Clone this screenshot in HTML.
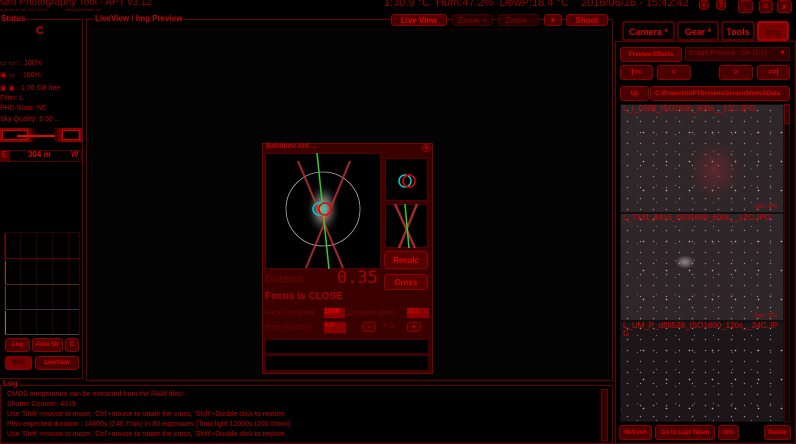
<!DOCTYPE html>
<html><head><meta charset="utf-8"><style>
*{margin:0;padding:0;box-sizing:border-box}
body{width:796px;height:444px;background:#000;overflow:hidden;position:relative;font-family:"Liberation Sans","DejaVu Sans",sans-serif;color:#c00000}
.a{position:absolute}
.t{position:absolute;white-space:nowrap}
.btn{position:absolute;background:#4a0000;border:1px solid #800;border-radius:3px;color:#e00000;font-weight:bold;font-size:8px;text-align:center;display:flex;align-items:center;justify-content:center;white-space:nowrap}
.box{position:absolute;border:1px solid #5a0000}
.img{position:absolute;background:#2e2628;background-image:radial-gradient(circle,#a08890 0.5px,transparent 0.9px),radial-gradient(circle,#705860 0.5px,transparent 0.9px),radial-gradient(circle,#c0a8b0 0.6px,transparent 1px);background-size:13px 11px,19px 17px,23px 29px;background-position:0 0,7px 4px,11px 13px}
.lbl{position:absolute;color:#e00000;font-size:7px;white-space:nowrap}
.il{position:absolute;white-space:nowrap;font-size:8px;color:#d00;z-index:2}
</style></head><body>
<div class="t" style="left:0;top:-3px;font-size:10px;color:#900">stro Photography Tool - APT v3.12</div>
<div class="t" style="left:0;top:7px;font-size:4px;color:#900">(c)Incanus Ltd. 2009-2016 &nbsp;&nbsp;&nbsp;&nbsp;&nbsp;&nbsp;&nbsp;&nbsp;&nbsp;&nbsp;&nbsp;&nbsp;&nbsp;&nbsp;&nbsp; www.AstroPlace.net</div>
<div class="t" style="left:384px;top:-3px;font-size:11px;color:#900">1:30.9 °C &nbsp;Hum:47.2% &nbsp;DewP:18.4 °C &nbsp;&nbsp;&nbsp;2016/06/16 - 15:42:42</div>
<div class="btn" style="left:699px;top:0;width:10px;height:10px;font-size:7px">i</div>
<div class="btn" style="left:716px;top:0;width:10px;height:10px;font-size:7px">?</div>
<div class="btn" style="left:738px;top:0;width:15px;height:13px">_</div>
<div class="btn" style="left:759px;top:0;width:14px;height:13px">=</div>
<div class="btn" style="left:777px;top:0;width:15px;height:13px">x</div>

<div class="box" style="left:-2px;top:19px;width:85px;height:360px;border-color:#600"></div>
<div class="t" style="left:0;top:14px;font-size:8px;background:#000;padding:0 1px;color:#c00;font-weight:bold">Status</div>
<div class="t" style="left:36px;top:25px;font-size:11px;font-weight:bold;color:#c00">C</div>
<div class="lbl" style="left:0;top:59px;color:#b00">▭ ▭ ⁄ : 100%</div>
<div class="lbl" style="left:0;top:71px;color:#b00">▣ ▭ &nbsp;: 100%</div>
<div class="lbl" style="left:0;top:84px;color:#b00">▣ ▣ : 1.76 GB free</div>
<div class="lbl" style="left:0;top:95px;color:#b00">Filter: L</div>
<div class="lbl" style="left:0;top:105px;color:#b00">PHD State: NC</div>
<div class="lbl" style="left:0;top:116px;color:#b00">Sky Quality: 6.50 ...</div>
<div class="a" style="left:0;top:128px;width:82px;height:14px;background:linear-gradient(90deg,#800 0,#800 28px,#300 32px,#000 38px,#000 52px,#300 56px,#800 62px,#800)"></div>
<div class="a" style="left:2px;top:130px;width:26px;height:10px;border:1px solid #c00;background:#000"></div>
<div class="a" style="left:62px;top:130px;width:18px;height:10px;border:1px solid #c00;background:#000"></div>
<div class="a" style="left:17px;top:135px;width:38px;height:2px;background:#e00"></div>
<div class="a" style="left:0;top:150px;width:82px;height:12px;border:1px solid #500"></div>
<div class="a" style="left:0;top:150px;width:10px;height:12px;background:#500"></div>
<div class="t" style="left:2px;top:150px;font-size:8px;font-weight:bold">E</div>
<div class="t" style="left:28px;top:150px;font-size:8px;font-weight:bold;color:#d00">304 m</div>
<div class="t" style="left:71px;top:150px;font-size:8px;font-weight:bold">W</div>
<div class="a" style="left:4px;top:232px;width:76px;height:103px;border:1px solid #300;background:repeating-linear-gradient(90deg,transparent 0 15px,#2a0000 15px 16px)"></div>
<div class="a" style="left:5px;top:258px;width:74px;height:1px;background:#600"></div>
<div class="a" style="left:5px;top:284px;width:74px;height:1px;background:#553300"></div>
<div class="a" style="left:5px;top:309px;width:74px;height:1px;background:#403050"></div>
<div class="a" style="left:5px;top:334px;width:74px;height:1px;background:#444"></div>
<div class="a" style="left:5px;top:234px;width:1px;height:24px;background:#800"></div>
<div class="a" style="left:5px;top:261px;width:1px;height:23px;background:#660"></div>
<div class="a" style="left:5px;top:286px;width:1px;height:23px;background:#346"></div>
<div class="a" style="left:5px;top:311px;width:1px;height:23px;background:#777"></div>
<div class="btn" style="left:5px;top:338px;width:25px;height:14px;font-size:6px">Log</div>
<div class="btn" style="left:32px;top:338px;width:31px;height:14px;font-size:6px">Auto Str</div>
<div class="btn" style="left:65px;top:338px;width:14px;height:14px;font-size:6px">C</div>
<div class="btn" style="left:5px;top:356px;width:27px;height:14px;font-size:6px;background:#700;color:#300">RGB</div>
<div class="btn" style="left:35px;top:356px;width:44px;height:14px;font-size:6px">LiveView</div>

<div class="box" style="left:86px;top:19px;width:527px;height:362px;border-color:#600"></div>
<div class="t" style="left:94px;top:14px;font-size:8px;background:#000;padding:0 1px;font-weight:bold;color:#c00">LiveView / Img Preview</div>
<div class="btn" style="left:391px;top:14px;width:56px;height:12px;font-size:8px">Live View</div>
<div class="btn" style="left:452px;top:14px;width:41px;height:12px;font-size:8px;background:#200;color:#700;border-color:#400">Zoom +</div>
<div class="btn" style="left:498px;top:14px;width:41px;height:12px;font-size:8px;background:#200;color:#700;border-color:#400">Zoom -</div>
<div class="btn" style="left:544px;top:14px;width:18px;height:12px;font-size:9px">+</div>
<div class="btn" style="left:566px;top:14px;width:42px;height:12px;font-size:8px">Shoot</div>
<div class="a" style="left:91px;top:29px;width:518px;height:351px;border:1px dotted #2a0000;background:#030303"></div>

<div class="a" style="left:262px;top:143px;width:171px;height:231px;background:#3a0000;border:1px solid #700"></div>
<div class="t" style="left:266px;top:143px;font-size:7px;font-weight:bold;color:#b00">Bahtinov Aid ...</div>
<div class="btn" style="left:422px;top:144px;width:9px;height:8px;font-size:6px">x</div>
<div class="a" style="left:265px;top:153px;width:116px;height:116px;background:#000;border:1px solid #500"></div>
<svg class="a" style="left:265px;top:153px" width="116" height="116">
<defs><radialGradient id="g"><stop offset="0" stop-color="#fff"/><stop offset=".4" stop-color="#888"/><stop offset="1" stop-color="#000" stop-opacity="0"/></radialGradient></defs>
<ellipse cx="58" cy="56" rx="18" ry="28" fill="url(#g)" opacity=".7"/>
<circle cx="58" cy="56" r="37" fill="none" stroke="#aaa" stroke-width=".8"/>
<line x1="33" y1="8" x2="78" y2="115" stroke="#c33" stroke-width="2" opacity=".8"/>
<line x1="85" y1="8" x2="41" y2="115" stroke="#c33" stroke-width="2" opacity=".8"/>
<line x1="52" y1="0" x2="64" y2="116" stroke="#3c3" stroke-width="1.5"/>
<circle cx="54" cy="56" r="6" fill="none" stroke="#0cc" stroke-width="1.5"/>
<circle cx="60" cy="56" r="6" fill="none" stroke="#e00" stroke-width="1.5"/>
</svg>
<div class="a" style="left:385px;top:158px;width:43px;height:43px;background:#000;border:1px solid #500"></div>
<svg class="a" style="left:385px;top:158px" width="43" height="43"><circle cx="20" cy="23" r="6" fill="none" stroke="#0cc" stroke-width="1.5"/><circle cx="24" cy="23" r="6" fill="none" stroke="#e00" stroke-width="1.5"/></svg>
<div class="a" style="left:385px;top:204px;width:43px;height:44px;background:#000;border:1px solid #500"></div>
<svg class="a" style="left:385px;top:204px" width="43" height="44"><line x1="10" y1="0" x2="30" y2="44" stroke="#c33" stroke-width="2.5" opacity=".8"/><line x1="32" y1="0" x2="14" y2="44" stroke="#c33" stroke-width="2.5" opacity=".8"/><line x1="20" y1="0" x2="24" y2="44" stroke="#3c3" stroke-width="1.5"/></svg>
<div class="btn" style="left:384px;top:251px;width:44px;height:18px;font-size:8px;background:#500">Recalc</div>
<div class="t" style="left:265px;top:274px;font-size:10px;color:#700">Distance:</div>
<div class="t" style="left:337px;top:268px;font-size:17px;color:#a00;font-family:'DejaVu Sans Mono',monospace">0.35</div>
<div class="btn" style="left:384px;top:274px;width:44px;height:16px;font-size:8px;background:#500">Cross</div>
<div class="t" style="left:265px;top:291px;font-size:10px;font-weight:bold;color:#a00">Focus is CLOSE</div>
<div class="t" style="left:265px;top:310px;font-size:7px;color:#700">Focal Len (mm):</div>
<div class="a" style="left:324px;top:308px;width:21px;height:10px;background:#800;color:#e00;font-size:7px;font-weight:bold">1000</div>
<div class="t" style="left:348px;top:310px;font-size:7px;color:#700">Diameter (mm):</div>
<div class="a" style="left:407px;top:308px;width:22px;height:10px;background:#800;color:#e00;font-size:7px">203</div>
<div class="t" style="left:265px;top:324px;font-size:7px;color:#700">Pixel (microns):</div>
<div class="a" style="left:324px;top:322px;width:22px;height:11px;background:#800;color:#e00;font-size:7px">4.3</div>
<div class="btn" style="left:362px;top:322px;width:14px;height:10px;font-size:7px">-</div>
<div class="t" style="left:383px;top:321px;font-size:8px;color:#700"># 1</div>
<div class="btn" style="left:407px;top:322px;width:14px;height:10px;font-size:7px">+</div>
<div class="a" style="left:265px;top:339px;width:164px;height:15px;background:#000;border:1px solid #400"></div>
<div class="a" style="left:265px;top:355px;width:164px;height:16px;background:#000;border:1px solid #400"></div>

<div class="btn" style="left:622px;top:21px;width:53px;height:20px;font-size:9px;align-items:flex-start;padding-top:4px;background:#000;border:2px solid #500;color:#d00">Camera *</div>
<div class="btn" style="left:677px;top:21px;width:42px;height:20px;font-size:9px;align-items:flex-start;padding-top:4px;background:#000;border:2px solid #500;color:#d00">Gear *</div>
<div class="btn" style="left:721px;top:21px;width:34px;height:20px;font-size:9px;align-items:flex-start;padding-top:4px;background:#000;border:2px solid #500;color:#d00">Tools</div>
<div class="btn" style="left:757px;top:21px;width:32px;height:20px;font-size:9px;align-items:flex-start;padding-top:4px;background:#7a0000;border:2px solid #a00;color:#300;font-weight:normal">Img</div>
<div class="box" style="left:615px;top:41px;width:181px;height:403px;border-color:#600"></div>
<div class="btn" style="left:620px;top:47px;width:62px;height:15px;font-size:6px">Preview Effects</div>
<div class="a" style="left:685px;top:47px;width:105px;height:14px;background:#300;border:1px solid #500;color:#900;font-size:7px;padding:2px 3px">Image Preview : On (1:1)<span style="position:absolute;right:3px;color:#c00">▼</span></div>
<div class="btn" style="left:620px;top:65px;width:33px;height:15px;font-size:7px">|&lt;&lt;</div>
<div class="btn" style="left:657px;top:65px;width:34px;height:15px;font-size:7px">&lt;</div>
<div class="btn" style="left:719px;top:65px;width:34px;height:15px;font-size:7px">&gt;</div>
<div class="btn" style="left:757px;top:65px;width:33px;height:15px;font-size:7px">&gt;&gt;|</div>
<div class="btn" style="left:620px;top:86px;width:29px;height:15px;font-size:6px">Up</div>
<div class="btn" style="left:650px;top:86px;width:140px;height:15px;font-size:6px;justify-content:flex-start;padding-left:4px;overflow:hidden">C:\Projects\APTScreens\ScreenShots3\Data</div>
<div class="a" style="left:620px;top:104px;width:164px;height:318px;background:#111"></div>
<div class="img" style="left:621px;top:105px;width:162px;height:107px"></div>
<div class="a" style="left:690px;top:140px;width:50px;height:60px;background:radial-gradient(ellipse,rgba(140,40,50,.5),transparent 70%)"></div>
<div class="il" style="left:623px;top:104px">L_t_0398_ISO1600_600s__12C.JPG</div>
<div class="il" style="left:754px;top:204px;font-size:5px">Type: JPG</div>
<div class="img" style="left:621px;top:214px;width:162px;height:106px"></div>
<div class="a" style="left:675px;top:255px;width:20px;height:14px;background:radial-gradient(ellipse,rgba(220,200,200,.6),transparent 70%)"></div>
<div class="il" style="left:623px;top:213px">L_7331_8415_ISO1600_600s__12C.JPG</div>
<div class="il" style="left:754px;top:313px;font-size:5px">Type: JPG</div>
<div class="img" style="left:621px;top:323px;width:162px;height:98px;background-color:#1d1618"></div>
<div class="il" style="left:623px;top:322px;line-height:8px">L_UM_P_dff8528_ISO1600_120s__24C.JP<br>G</div>
<div class="a" style="left:784px;top:104px;width:6px;height:318px;background:#100;border:1px solid #400"></div>
<div class="a" style="left:784px;top:104px;width:6px;height:20px;background:#300;border:1px solid #700"></div>
<div class="btn" style="left:619px;top:425px;width:33px;height:15px;font-size:6px">Refresh</div>
<div class="btn" style="left:655px;top:425px;width:60px;height:15px;font-size:6px">Go to Last Taken</div>
<div class="btn" style="left:718px;top:425px;width:21px;height:15px;font-size:6px">Info</div>
<div class="btn" style="left:764px;top:425px;width:27px;height:15px;font-size:6px">Delete</div>

<div class="box" style="left:0;top:385px;width:613px;height:59px;border-color:#600"></div>
<div class="t" style="left:2px;top:379px;font-size:8px;background:#000;padding:0 1px;font-weight:bold">Log</div>
<div class="a" style="left:7px;top:390px;font-size:7px;line-height:10px;color:#b00;white-space:nowrap">CMOS temperature can be extracted from the RAW files!<br>Shutter Counter: 4319<br>Use 'Shift'+mouse to move, 'Ctrl'+mouse to rotate the cross, 'Shift'+Double click to restore.<br>Plan expected duration : 14800s (246.7min) in 80 exposures [Total light 12000s (200.0min)]<br>Use 'Shift'+mouse to move, 'Ctrl'+mouse to rotate the cross, 'Shift'+Double click to restore.</div>
<div class="a" style="left:601px;top:389px;width:7px;height:52px;background:#300;border:1px solid #600"></div>
</body></html>
